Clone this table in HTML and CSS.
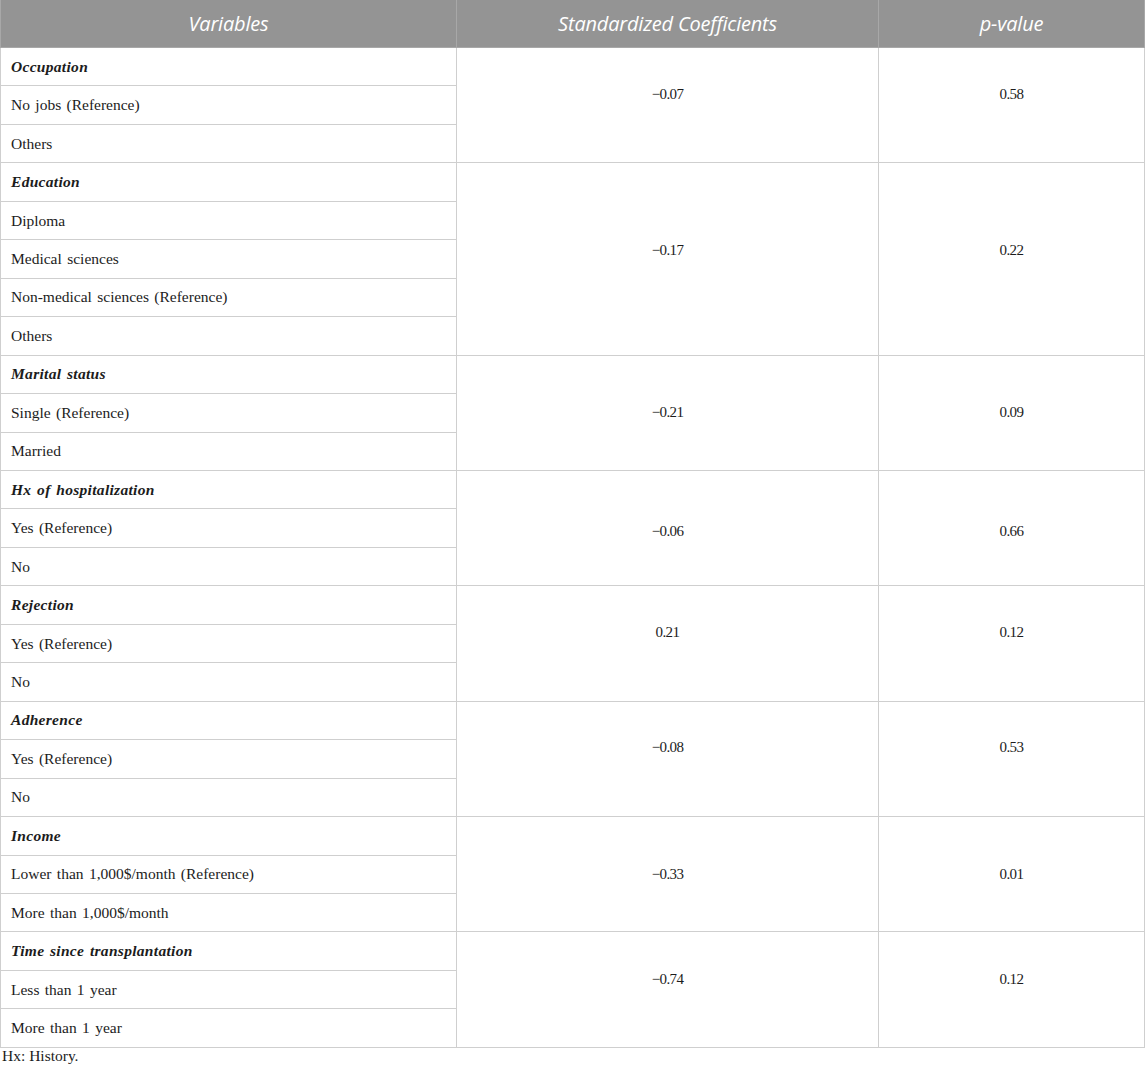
FILE: index.html
```html
<!DOCTYPE html>
<html lang="en">
<head>
<meta charset="utf-8">
<title>Table</title>
<link rel="stylesheet" href="styles.css">
</head>
<body>
<table class="data">
  <colgroup>
    <col class="c1"><col class="c2"><col class="c3">
  </colgroup>
  <thead>
    <tr><th>Variables</th><th>Standardized Coefficients</th><th>p-value</th></tr>
  </thead>
  <tbody>
    <tr><td class="grp">Occupation</td><td class="num up21" rowspan="3">−0.07</td><td class="num up21" rowspan="3">0.58</td></tr>
    <tr><td>No jobs (Reference)</td></tr>
    <tr><td>Others</td></tr>

    <tr><td class="grp">Education</td><td class="num up16" rowspan="5">−0.17</td><td class="num up16" rowspan="5">0.22</td></tr>
    <tr><td>Diploma</td></tr>
    <tr><td>Medical sciences</td></tr>
    <tr><td>Non-medical sciences (Reference)</td></tr>
    <tr><td>Others</td></tr>

    <tr><td class="grp">Marital status</td><td class="num" rowspan="3">−0.21</td><td class="num" rowspan="3">0.09</td></tr>
    <tr><td>Single (Reference)</td></tr>
    <tr><td>Married</td></tr>

    <tr><td class="grp">Hx of hospitalization</td><td class="num dn7" rowspan="3">−0.06</td><td class="num dn7" rowspan="3">0.66</td></tr>
    <tr><td>Yes (Reference)</td></tr>
    <tr><td>No</td></tr>

    <tr><td class="grp">Rejection</td><td class="num up22" rowspan="3">0.21</td><td class="num up22" rowspan="3">0.12</td></tr>
    <tr><td>Yes (Reference)</td></tr>
    <tr><td>No</td></tr>

    <tr><td class="grp">Adherence</td><td class="num up23" rowspan="3">−0.08</td><td class="num up23" rowspan="3">0.53</td></tr>
    <tr><td>Yes (Reference)</td></tr>
    <tr><td>No</td></tr>

    <tr><td class="grp">Income</td><td class="num" rowspan="3">−0.33</td><td class="num" rowspan="3">0.01</td></tr>
    <tr><td>Lower than 1,000$/month (Reference)</td></tr>
    <tr><td>More than 1,000$/month</td></tr>

    <tr><td class="grp">Time since transplantation</td><td class="num up21" rowspan="3">−0.74</td><td class="num up21" rowspan="3">0.12</td></tr>
    <tr><td>Less than 1 year</td></tr>
    <tr><td>More than 1 year</td></tr>
  </tbody>
</table>
<p class="note">Hx: History.</p>
</body>
</html>
```

FILE: styles.css
```css
html, body {
  margin: 0;
  padding: 0;
  background: #ffffff;
}

body {
  font-family: "Liberation Serif", "Times New Roman", serif;
  color: #1c1c1c;
}

.data {
  width: 1144px;
  border-collapse: collapse;
  table-layout: fixed;
}

.c1 { width: 456px; }
.c2 { width: 422px; }
.c3 { width: 266px; }

.data th {
  height: 47px;
  padding: 0;
  background: #949494;
  color: #ffffff;
  font-family: "Open Sans", "DejaVu Sans", sans-serif;
  font-style: italic;
  font-weight: 400;
  font-size: 20px;
  letter-spacing: -0.2px;
  text-align: center;
  vertical-align: middle;
  border: 1px solid #a8a8a8;
  border-top: none;
}

.data td {
  height: 37.46px;
  padding: 0 10px;
  border: 1px solid #cfcfcf;
  font-size: 15.5px;
  word-spacing: 1.5px;
  vertical-align: middle;
  white-space: nowrap;
}

.data td.grp {
  font-weight: bold;
  font-style: italic;
  letter-spacing: 0.3px;
}

.data td.num {
  text-align: center;
  font-size: 15px;
  letter-spacing: -0.6px;
}

.data td.up16 { padding-bottom: 16px; }
.data td.up21 { padding-bottom: 21px; }
.data td.up22 { padding-bottom: 22px; }
.data td.up23 { padding-bottom: 23px; }
.data td.dn7 { padding-top: 7px; }

.note {
  margin: 0 0 0 2px;
  font-size: 15.5px;
  line-height: 16px;
  padding-top: 0;
}
```
